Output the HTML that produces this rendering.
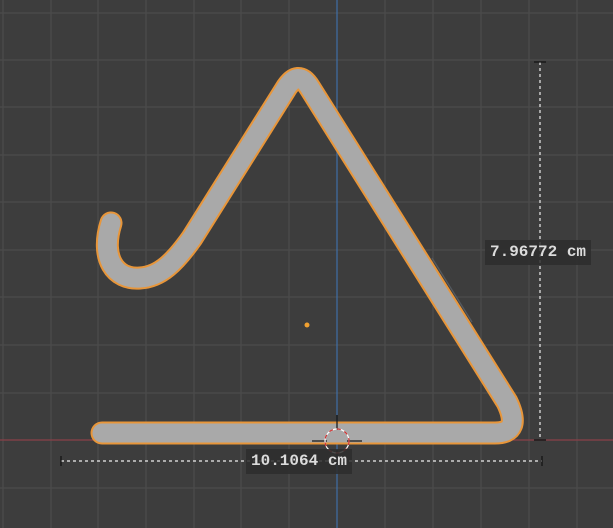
<!DOCTYPE html>
<html><head><style>
html,body{margin:0;padding:0;background:#3d3d3d;width:613px;height:528px;overflow:hidden}
.lbl{position:absolute;background:rgba(45,45,45,0.85);color:#dcdcdc;font-family:"Liberation Mono","DejaVu Sans Mono",monospace;font-size:16px;font-weight:bold;line-height:25px;padding:0 5px;white-space:pre}
</style></head><body>
<svg width="613" height="528" style="position:absolute;left:0;top:0">
<g stroke="#4b4b4b" stroke-width="1.3">
<line x1="3" y1="0" x2="3" y2="528"/><line x1="51" y1="0" x2="51" y2="528"/><line x1="98" y1="0" x2="98" y2="528"/><line x1="146" y1="0" x2="146" y2="528"/><line x1="194" y1="0" x2="194" y2="528"/><line x1="241" y1="0" x2="241" y2="528"/><line x1="289" y1="0" x2="289" y2="528"/><line x1="385" y1="0" x2="385" y2="528"/><line x1="433" y1="0" x2="433" y2="528"/><line x1="481" y1="0" x2="481" y2="528"/><line x1="529" y1="0" x2="529" y2="528"/><line x1="577" y1="0" x2="577" y2="528"/>
<line x1="0" y1="13" x2="613" y2="13"/><line x1="0" y1="60" x2="613" y2="60"/><line x1="0" y1="107" x2="613" y2="107"/><line x1="0" y1="155" x2="613" y2="155"/><line x1="0" y1="202" x2="613" y2="202"/><line x1="0" y1="250" x2="613" y2="250"/><line x1="0" y1="297" x2="613" y2="297"/><line x1="0" y1="345" x2="613" y2="345"/><line x1="0" y1="393" x2="613" y2="393"/><line x1="0" y1="488" x2="613" y2="488"/>
</g>
<line x1="337" y1="0" x2="337" y2="528" stroke="#3f6fa6" stroke-width="1.2"/>
<line x1="0" y1="440" x2="613" y2="440" stroke="#8a4148" stroke-width="1.2"/>
<path d="M111,223 C100,258 115,280 140,278 C160,277 175,262 192,238 L285,90 Q298,68 310,88 L507,402 Q522,433 495,433 L102,433" fill="none" stroke="#e8963a" stroke-width="23" stroke-linecap="round" stroke-linejoin="round"/>
<path d="M111,223 C100,258 115,280 140,278 C160,277 175,262 192,238 L285,90 Q298,68 310,88 L507,402 Q522,433 495,433 L102,433" fill="none" stroke="#a9a9a9" stroke-width="19" stroke-linecap="round" stroke-linejoin="round"/>
<line x1="432" y1="258" x2="472" y2="322" stroke="#555a60" stroke-width="1.2"/>
<circle cx="307" cy="325" r="2.5" fill="#f0a030"/>
<g stroke="#eee" stroke-width="1.2" stroke-dasharray="3,3">
<line x1="540" y1="62" x2="540" y2="440"/>
<line x1="61" y1="461" x2="542" y2="461"/>
</g>
<g stroke="#111" stroke-width="1.2">
<line x1="534" y1="62" x2="546" y2="62"/><line x1="534" y1="440" x2="546" y2="440"/>
<line x1="61" y1="456" x2="61" y2="466"/><line x1="542" y1="456" x2="542" y2="466"/>
<line x1="337" y1="415" x2="337" y2="430"/><line x1="337" y1="450" x2="337" y2="465"/>
<line x1="312" y1="441" x2="327" y2="441"/><line x1="347" y1="441" x2="362" y2="441"/>
</g>
<circle cx="337" cy="441" r="12" fill="none" stroke="#fff" stroke-width="1.2"/>
<circle cx="337" cy="441" r="12" fill="none" stroke="#d03030" stroke-width="1.2" stroke-dasharray="4,4"/>
</svg>
<div class="lbl" style="left:485px;top:240px">7.96772 cm</div>
<div class="lbl" style="left:246px;top:449px">10.1064 cm</div>
</body></html>
